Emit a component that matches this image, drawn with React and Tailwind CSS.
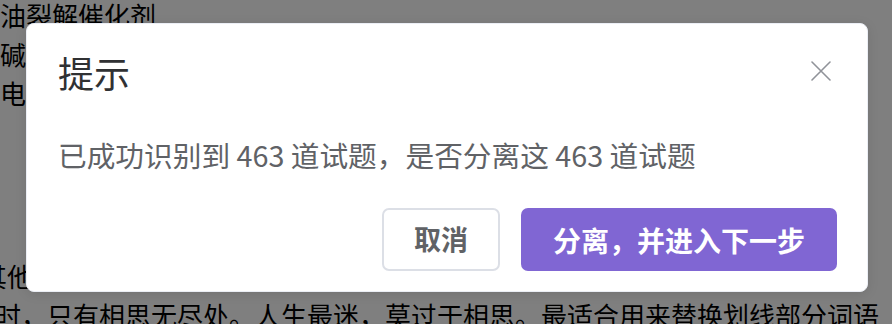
import React from "react";

const font = { fontFamily: '"Noto Sans CJK SC", "Noto Sans", sans-serif' };

export default function App() {
  return (
    <div
      className="relative w-[892px] h-[324px] overflow-hidden bg-white text-black"
      style={font}
    >
      {/* page content behind the overlay */}
      <div className="text-[26px] leading-[39px] whitespace-nowrap -mt-[5px]">
        <div>油裂解催化剂</div>
        <div>碱性溶液的配制与使用方法</div>
        <div>电解质溶液中离子浓度的比较</div>
        <div className="h-[144px]" />
        <div className="-ml-[19px]">其他题型的说明与示例内容</div>
        <div className="-ml-[5px]">时，只有相思无尽处。人生最迷，莫过于相思。最适合用来替换划线部分词语</div>
      </div>

      {/* overlay */}
      <div className="absolute inset-0 bg-black/50" />

      {/* dialog */}
      <div className="absolute top-[23px] left-[26px] w-[842px] h-[269px] bg-white rounded-[8px] border border-[#ebeef5] shadow-[0_2px_12px_rgba(0,0,0,0.1)] flex flex-col">
        <div className="flex items-center justify-between pt-[28px] pl-[31px] pr-[36px]">
          <div className="text-[36px] leading-[40px] text-[#303133]">提示</div>
          <svg width="20" height="20" viewBox="0 0 20 20" className="mt-[-2px]">
            <path
              d="M1 1 L19 19 M19 1 L1 19"
              stroke="#909399"
              strokeWidth="1.6"
              strokeLinecap="round"
            />
          </svg>
        </div>
        <div className="mt-[42px] pl-[31px] text-[28.7px] leading-[42px] text-[#606266] whitespace-nowrap">
          已成功识别到 463 道试题，是否分离这 463 道试题
        </div>
        <div className="mt-auto flex justify-end gap-[21px] pr-[30px] pb-[20px]">
          <button className="w-[118px] h-[63px] rounded-[7px] border-2 border-[#dcdfe6] bg-white text-[27px] font-bold text-[#606266] flex items-center justify-center">
            取消
          </button>
          <button className="w-[316px] h-[63px] rounded-[7px] bg-[#8066d3] text-[28px] font-bold text-white flex items-center justify-center">
            分离，并进入下一步
          </button>
        </div>
      </div>
    </div>
  );
}
